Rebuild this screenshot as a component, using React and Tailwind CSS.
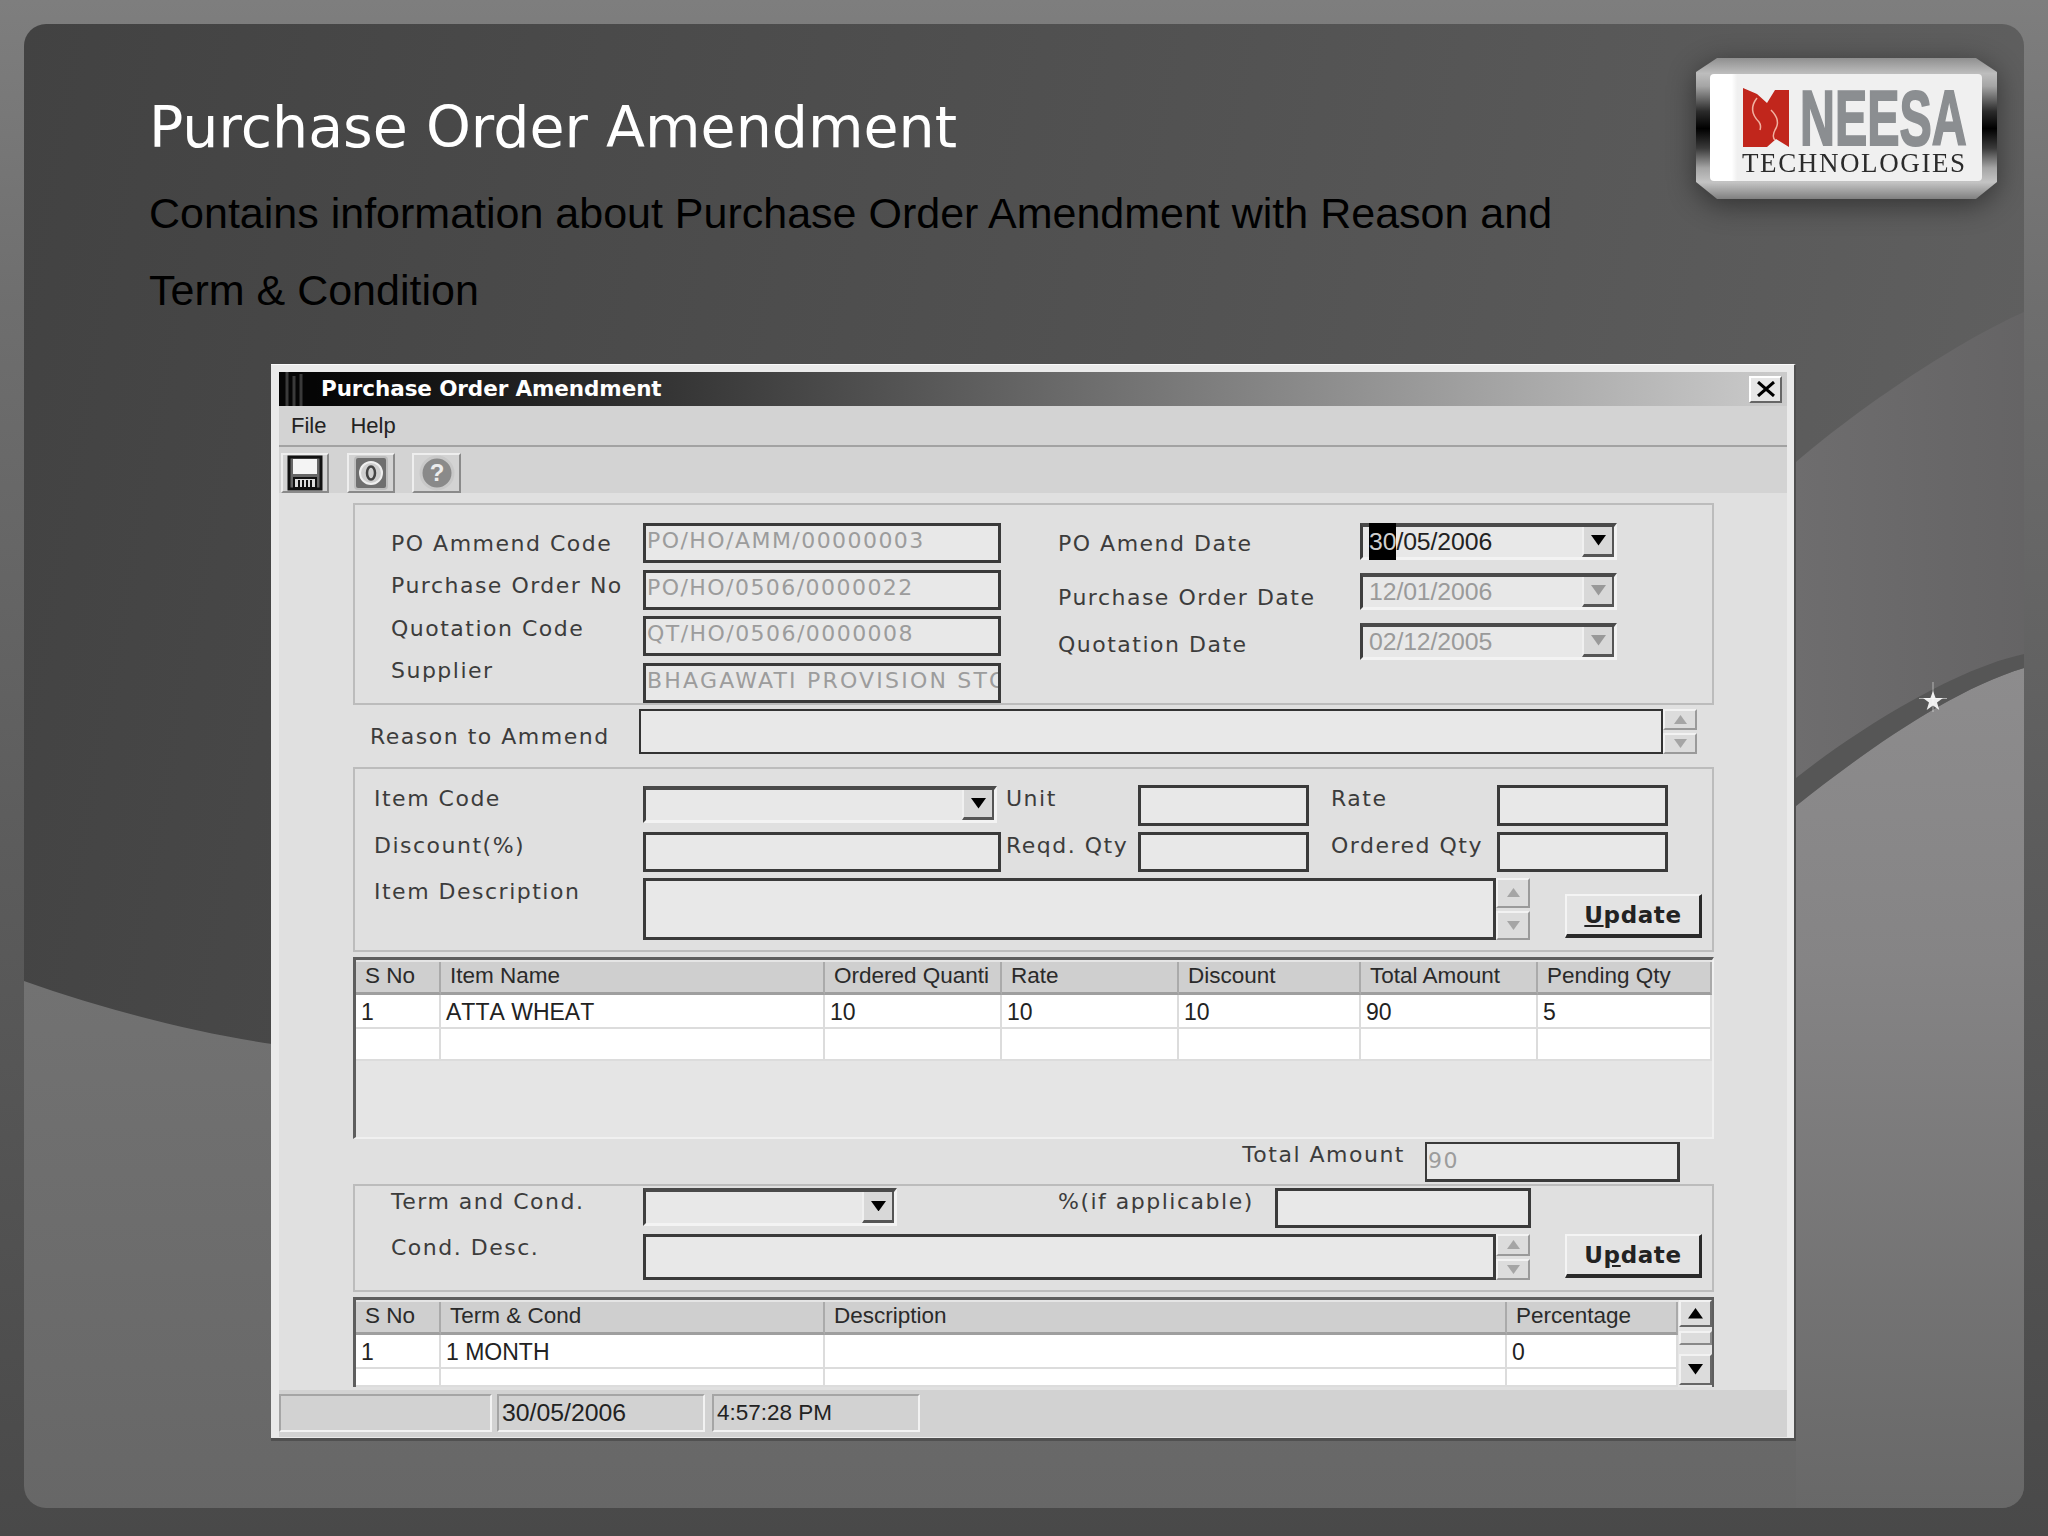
import React from "react";

const LABEL = "flex h-[28px] items-center whitespace-nowrap text-[22px] leading-none tracking-[1.5px] text-[#3c3c3c] [font-family:'DejaVu_Sans',sans-serif]";
const PANEL = "w-[1361px] border-2 border-[#bcbcbc] bg-[#e0e0e0]";
const ARIAL = "[font-family:'Liberation_Sans',Arial,sans-serif]";

function Arrow({ up, color = "#000", size = 15 }) {
  return (
    <svg width={size} height={size * 0.7} viewBox="0 0 16 11">
      <path d={up ? "M8 0L16 11H0Z" : "M0 0H16L8 11Z"} fill={color} />
    </svg>
  );
}

function Input({ value, className }) {
  return (
    <div className={`flex h-[40px] items-start overflow-hidden whitespace-nowrap border-[3px] border-[#3a3a3a] bg-[#e8e8e8] pl-[1px] pt-[2px] text-[22px] leading-[26px] tracking-[1.45px] text-[#9c9c9c] [font-family:'DejaVu_Sans',sans-serif] ${className}`}>
      {value}
    </div>
  );
}

function Combo({ value, disabled, selected, className }) {
  return (
    <div className={`flex items-stretch border-b-[3px] border-l-[3px] border-r-[3px] border-t-[4px] border-b-[#f3f3f3] border-l-[#3f3f3f] border-r-[#f3f3f3] border-t-[#4a4a4a] bg-[#e8e8e8] ${className}`}>
      <div className={`flex flex-1 items-center pl-[6px] text-[24.800px] tracking-[-0.1px] ${ARIAL} ${disabled ? "text-[#9a9a9a]" : "text-[#222]"}`}>
        {selected && <span className="bg-black text-[#cfcfcf]">30</span>}
        {value}
      </div>
      <div className="flex w-[32px] items-center justify-center border-b-[3px] border-l-2 border-r-2 border-b-[#555] border-l-[#f0f0f0] border-r-[#555] bg-[#d8d8d8]">
        <Arrow color={disabled ? "#999" : "#000"} />
      </div>
    </div>
  );
}

function Spinner({ className }) {
  const btn = "flex flex-1 items-center justify-center border-2 border-b-[#9a9a9a] border-l-[#f2f2f2] border-r-[#9a9a9a] border-t-[#f2f2f2] bg-[#dcdcdc]";
  return (
    <div className={`flex w-[34px] flex-none flex-col gap-[3px] ${className}`}>
      <div className={btn}><Arrow up color="#a5a5a5" size={13} /></div>
      <div className={btn}><Arrow color="#a5a5a5" size={13} /></div>
    </div>
  );
}

function UpdateButton({ mnemonic, className }) {
  return (
    <div className={`flex w-[137px] flex-none items-center justify-center border-b-[4px] border-l-2 border-r-[3px] border-t-2 border-b-[#2a2a2a] border-l-[#f4f4f4] border-r-[#2a2a2a] border-t-[#f4f4f4] bg-[#e3e3e3] text-[23px] font-bold tracking-[0.6px] text-[#222] [font-family:'DejaVu_Sans',sans-serif] ${className}`}>
      {mnemonic === 0 ? (<><u>U</u>pdate</>) : (<>U<u>p</u>date</>)}
    </div>
  );
}

function Row({ template, cells, head, className }) {
  const cell = head
    ? `flex items-center overflow-hidden whitespace-nowrap border-b-[3px] border-r-2 border-b-[#9f9f9f] border-r-[#aaa] bg-[#cfcfcf] pb-[2px] pl-[9px] text-[22.500px] text-[#2a2a2a] ${ARIAL}`
    : `flex items-center overflow-hidden whitespace-nowrap border-b-2 border-r-2 border-[#dcdcdc] bg-white pl-[5px] pt-[3px] text-[23px] text-[#222] [font-kerning:none] ${ARIAL}`;
  return (
    <div className={`grid ${template} ${className}`}>
      {cells.map((c, i) => <div key={i} className={cell}>{c}</div>)}
    </div>
  );
}

function Floppy() {
  return (
    <svg width="36" height="36" viewBox="0 0 36 36">
      <rect x="2" y="2" width="32" height="32" fill="#666" stroke="#111" strokeWidth="3" />
      <rect x="6" y="4" width="24" height="15" fill="#f4f4f4" />
      <rect x="7" y="23" width="22" height="10" fill="#ddd" stroke="#111" strokeWidth="2" />
      <path d="M12 25v7M16 25v7M20 25v7M24 25v7" stroke="#111" strokeWidth="2" />
    </svg>
  );
}

function TargetIcon() {
  return (
    <svg width="36" height="36" viewBox="0 0 36 36">
      <rect x="2" y="2" width="32" height="32" rx="3" fill="#6f6f6f" stroke="#bdbdbd" strokeWidth="2" />
      <circle cx="18" cy="18" r="11" fill="#cfcfcf" stroke="#efefef" strokeWidth="2" />
      <ellipse cx="18" cy="18" rx="4" ry="6.500" fill="none" stroke="#444" strokeWidth="2.500" />
    </svg>
  );
}

function HelpIcon() {
  return (
    <svg width="38" height="38" viewBox="0 0 38 38">
      <circle cx="19" cy="19" r="16" fill="#8a8a8a" stroke="#c9c9c9" strokeWidth="3" />
      <text x="19" y="27" textAnchor="middle" fontSize="24" fontWeight="bold" fill="#ececec" fontFamily="Liberation Sans">?</text>
    </svg>
  );
}

function Backdrop() {
  return (
    <svg className="absolute inset-0" width="2000" height="1484" viewBox="24 24 2000 1484">
      <defs>
        <linearGradient id="lower" x1="0" y1="0" x2="0" y2="1">
          <stop offset="0" stopColor="#727272" />
          <stop offset="1" stopColor="#676767" />
        </linearGradient>
        <linearGradient id="side" x1="0" y1="0" x2="1" y2="0">
          <stop offset="0" stopColor="#6e6d6e" />
          <stop offset="1" stopColor="#656465" />
        </linearGradient>
        <linearGradient id="swoosh" x1="0" y1="0" x2="0" y2="1">
          <stop offset="0" stopColor="#8d8c8d" />
          <stop offset="0.35" stopColor="#858485" />
          <stop offset="1" stopColor="#686868" />
        </linearGradient>
      </defs>
      <path d="M24 981C100 1008 190 1032 272 1044L1800 1300V1508H24Z" fill="url(#lower)" />
      <path d="M1796 462C1850 415 1950 345 2024 312V670L1796 810Z" fill="url(#side)" />
      <path d="M1796 806C1860 755 1950 690 2024 668V1508H1796Z" fill="url(#swoosh)" />
      <path d="M1796 778C1850 735 1950 670 2024 654V668C1950 690 1860 755 1796 806Z" fill="#565656" />
      <g fill="#fff">
        <path d="M1933 691l2.600 7h7.400l-6 4.500 2.300 7.500-6.300-4.500-6.300 4.500 2.300-7.500-6-4.500h7.400Z" opacity="0.9" />
        <rect x="1932.500" y="682" width="1" height="30" opacity="0.5" />
        <rect x="1919" y="698" width="28" height="1" opacity="0.5" />
      </g>
    </svg>
  );
}

function Logo() {
  return (
    <div className="mr-[27px] mt-[34px] drop-shadow-[0_6px_14px_rgba(0,0,0,0.45)]">
      <div className="h-[141px] w-[301px] bg-[linear-gradient(to_bottom,#8f8f8f_0%,#bdbdbd_11%,#a5a5a5_20%,#2a2a2a_38%,#000_50%,#3a3a3a_64%,#a5a5a5_78%,#c4c4c4_88%,#808080_100%)] px-[14px] pt-[16px] [clip-path:polygon(7%_0,93%_0,100%_10%,100%_88%,93%_100%,7%_100%,0_88%,0_10%)]">
        <div className="h-[107px] w-[272px] rounded-[4px] bg-[linear-gradient(to_right,#fff_0%,#fff_8%,#f0f0f0_10%,#f0f0f0_100%)] pl-[33px] pt-[14px]">
          <div className="flex h-[58px] items-start">
            <svg width="46" height="59" viewBox="0 0 46 59">
              <path d="M0 0L14 6L24 15L32 2H46V59L33 51L24 59H0Z" fill="#c1261c" />
              <path d="M14 10C6 20 10 28 16 34C18 37 18 39 17 42" fill="none" stroke="#f0b0a0" strokeWidth="1.500" />
              <path d="M28 22C36 30 36 36 32 42C30 46 30 50 32 52" fill="none" stroke="#f0b0a0" strokeWidth="1.500" />
            </svg>
            <div className="ml-[11px] mt-[2px] h-[56px] w-[165px]">
              <span className={`block origin-top-left scale-x-[0.62] whitespace-nowrap text-[78px] font-bold leading-[56px] text-[#8b8e91] [-webkit-text-stroke:2px_#8b8e91] ${ARIAL}`}>NEESA</span>
            </div>
          </div>
          <div className="mt-[5px] -ml-[1px] whitespace-nowrap text-[27px] leading-[24px] tracking-[1.600px] text-[#2b2b2b] [font-family:'Liberation_Serif',serif]">TECHNOLOGIES</div>
        </div>
      </div>
    </div>
  );
}

export default function App() {
  const grid1 = "grid-cols-[85px_384px_177px_177px_182px_177px_1fr]";
  const grid2 = "grid-cols-[85px_384px_682px_171px]";
  return (
    <div className="h-[1536px] w-[2048px] overflow-hidden bg-[linear-gradient(to_bottom,#7e7e7e_0%,#6e6e6e_20%,#5c5c5c_55%,#494949_100%)] p-[24px]">
      <div className="relative h-[1484px] w-[2000px] overflow-hidden rounded-[22px] bg-[linear-gradient(100deg,#424242_0%,#535353_55%,#626262_100%)]">
        <Backdrop />
        <div className="relative">
          {/* heading */}
          <header className="flex items-start justify-between">
            <div className="pl-[125px] pt-[63px]">
              <h1 className="h-[80px] whitespace-nowrap text-[57px] font-normal leading-[80px] text-white [font-family:'DejaVu_Sans',sans-serif]">Purchase Order Amendment</h1>
              <p className={`mt-[8px] text-[43px] leading-[77px] text-black ${ARIAL}`}>
                Contains information about Purchase Order Amendment with Reason and<br />Term &amp; Condition
              </p>
            </div>
            <Logo />
          </header>

          {/* application window */}
          <div className="ml-[247px] mt-[35px] h-[1077px] w-[1525px] border-b-[3px] border-r-[2px] border-t border-b-[#505050] border-r-[#505050] border-t-[#fafafa] bg-[#eaeaea] pl-[8px] pr-[7px] pt-[7px]">
            <div className="flex h-[34px] items-center bg-[linear-gradient(to_right,#000_0%,#6a6a6a_52%,#cbcbcb_100%)]">
              <svg width="36" height="34" viewBox="0 0 36 34">
                <rect width="36" height="34" fill="#050505" />
                <path d="M8 0v34M15 4v30M22 2v32" stroke="#3a3a3a" strokeWidth="3" />
              </svg>
              <span className="ml-[6px] whitespace-nowrap text-[21.500px] font-bold tracking-[-0.1px] text-white [font-family:'DejaVu_Sans',sans-serif]">Purchase Order Amendment</span>
              <div className="ml-auto mr-[5px] flex h-[27px] w-[33px] items-center justify-center border-2 border-b-[#666] border-l-white border-r-[#666] border-t-white bg-[#e6e6e6]">
                <svg width="20" height="16" viewBox="0 0 20 16"><path d="M2 1L18 15M18 1L2 15" stroke="#000" strokeWidth="3" /></svg>
              </div>
            </div>
            <nav className={`flex h-[41px] items-center gap-[24px] border-b-2 border-b-[#a2a2a2] bg-[#d3d3d3] pl-[12px] text-[22px] text-[#222] ${ARIAL}`}>
              <span>File</span>
              <span>Help</span>
            </nav>
            <div className="flex h-[46px] items-end bg-[#d3d3d3] pl-[2px]">
              <div className="flex h-[40px] w-[48px] items-center justify-center border-2 border-b-[#8a8a8a] border-l-[#eee] border-r-[#8a8a8a] border-t-[#eee]"><Floppy /></div>
              <div className="ml-[18px] flex h-[40px] w-[48px] items-center justify-center border-2 border-b-[#8a8a8a] border-l-[#eee] border-r-[#8a8a8a] border-t-[#eee]"><TargetIcon /></div>
              <div className="ml-[17px] flex h-[40px] w-[49px] items-center justify-center border-2 border-b-[#8a8a8a] border-l-[#eee] border-r-[#8a8a8a] border-t-[#eee]"><HelpIcon /></div>
            </div>

            {/* form */}
            <div className="h-[944px] bg-[#e0e0e0] pl-[74px] pt-[10px]">
              <section className={`${PANEL} flex h-[202px]`}>
                <div className="flex w-[288px] flex-col gap-[14.300px] pl-[36px] pt-[25px]">
                  <div className={LABEL}>PO Ammend Code</div>
                  <div className={LABEL}>Purchase Order No</div>
                  <div className={LABEL}>Quotation Code</div>
                  <div className={LABEL}>Supplier</div>
                </div>
                <div className="flex w-[358px] flex-col gap-[6.500px] pt-[18px]">
                  <Input value="PO/HO/AMM/00000003" />
                  <Input value="PO/HO/0506/0000022" />
                  <Input value="QT/HO/0506/0000008" />
                  <Input value={<span className="tracking-[2.200px]">BHAGAWATI PROVISION STORE</span>} />
                </div>
                <div className="ml-[57px] w-[302px] pt-[25px]">
                  <div className={LABEL}>PO Amend Date</div>
                  <div className={`${LABEL} mt-[26px]`}>Purchase Order Date</div>
                  <div className={`${LABEL} mt-[19px]`}>Quotation Date</div>
                </div>
                <div className="flex w-[257px] flex-col gap-[13.500px] pt-[18px]">
                  <Combo className="h-[36.500px]" selected value="/05/2006" />
                  <Combo className="h-[36.500px]" disabled value="12/01/2006" />
                  <Combo className="h-[36.500px]" disabled value="02/12/2005" />
                </div>
              </section>

              <div className="mt-[4px] flex h-[45px] w-[1360px] pl-[17px]">
                <div className={`${LABEL} mt-[14px] w-[269px]`}>Reason to Ammend</div>
                <div className="h-[45px] w-[1024px] border-2 border-[#333] bg-[#e8e8e8]" />
                <Spinner />
              </div>

              <section className={`${PANEL} mt-[13px] h-[185px] pl-[19px] pt-[16px]`}>
                <div className="grid grid-cols-[269px_363px_132px_193px_166px_1fr] grid-rows-[47px_46px_62px]">
                  <div className={LABEL}>Item Code</div>
                  <Combo className="mt-[1px] h-[37px] w-[354px]" />
                  <div className={LABEL}>Unit</div>
                  <Input className="h-[41px] w-[171px]" />
                  <div className={LABEL}>Rate</div>
                  <Input className="h-[41px] w-[171px]" />

                  <div className={LABEL}>Discount(%)</div>
                  <Input className="w-[358px]" />
                  <div className={LABEL}>Reqd. Qty</div>
                  <Input className="w-[171px]" />
                  <div className={LABEL}>Ordered Qty</div>
                  <Input className="w-[171px]" />

                  <div className={LABEL}>Item Description</div>
                  <div className="col-span-5 flex h-[62px]">
                    <div className="w-[853px] flex-none border-[3px] border-[#3a3a3a] bg-[#e8e8e8]" />
                    <Spinner />
                    <UpdateButton mnemonic={0} className="ml-[35px] mt-[16px] h-[44px]" />
                  </div>
                </div>
              </section>

              <div className="mt-[5px] h-[182px] w-[1361px] border-b-2 border-l-[3px] border-r-2 border-t-[3px] border-b-[#f0f0f0] border-l-[#5e5e5e] border-r-[#f0f0f0] border-t-[#5e5e5e] bg-[#e5e5e5] pt-[2px]">
                <Row head template={grid1} className="h-[33px]" cells={["S No", "Item Name", "Ordered Quanti", "Rate", "Discount", "Total Amount", "Pending Qty"]} />
                <Row template={grid1} className="h-[34px]" cells={["1", "ATTA WHEAT", "10", "10", "10", "90", "5"]} />
                <Row template={grid1} className="h-[32px]" cells={["", "", "", "", "", "", ""]} />
              </div>

              <div className="mt-[3px] flex h-[39px] w-[1327px] items-start justify-end">
                <div className={`${LABEL} mr-[20px] mt-[-1px]`}>Total Amount</div>
                <Input className="h-[39px] w-[255px] border-l-2 border-t-2 pt-[4px]" value="90" />
              </div>

              <section className={`${PANEL} mt-[3px] h-[108px] pl-[36px] pt-[2px]`}>
                <div className="grid grid-cols-[252px_415px_217px_1fr] grid-rows-[46px_46px]">
                  <div className={LABEL}>Term and Cond.</div>
                  <Combo className="h-[38px] w-[254px]" />
                  <div className={LABEL}>%(if applicable)</div>
                  <Input className="w-[256px]" />

                  <div className={LABEL}>Cond. Desc.</div>
                  <div className="col-span-3 flex h-[46px]">
                    <div className="w-[853px] flex-none border-[3px] border-[#3a3a3a] bg-[#e8e8e8]" />
                    <Spinner />
                    <UpdateButton mnemonic={1} className="ml-[35px] h-[44px]" />
                  </div>
                </div>
              </section>

              <div className="mt-[5px] flex h-[90px] w-[1361px] border-l-[3px] border-r-2 border-t-[3px] border-l-[#5e5e5e] border-r-[#5e5e5e] border-t-[#5e5e5e] bg-[#e5e5e5]">
                <div className="flex-1 overflow-hidden pt-[2px]">
                  <Row head template={grid2} className="h-[33px]" cells={["S No", "Term & Cond", "Description", "Percentage"]} />
                  <Row template={grid2} className="h-[34px]" cells={["1", "1 MONTH", "", "0"]} />
                  <Row template={grid2} className="h-[18px]" cells={["", "", "", ""]} />
                </div>
                <div className="flex w-[33px] flex-col">
                  <div className="flex h-[27px] items-center justify-center border-2 border-b-[#666] border-l-[#f2f2f2] border-r-[#666] border-t-[#f2f2f2] bg-[#dcdcdc]"><Arrow up /></div>
                  <div className="mt-[4px] h-[14px] border-2 border-b-[#888] border-l-[#f2f2f2] border-r-[#888] border-t-[#f2f2f2] bg-[#dcdcdc]" />
                  <div className="mt-[9px] flex h-[31px] items-center justify-center border-2 border-b-[#666] border-l-[#f2f2f2] border-r-[#666] border-t-[#f2f2f2] bg-[#dcdcdc]"><Arrow /></div>
                </div>
              </div>

              <div className={`-ml-[74px] mt-[3px] flex h-[47px] w-[1508px] items-start gap-[5px] bg-[#d2d2d2] pt-[4px] text-[#222] ${ARIAL}`}>
                <div className="h-[38px] w-[213px] border-2 border-b-[#f2f2f2] border-l-[#a5a5a5] border-r-[#f2f2f2] border-t-[#a5a5a5]" />
                <div className="flex h-[38px] w-[208px] items-center border-2 border-b-[#f2f2f2] border-l-[#a5a5a5] border-r-[#f2f2f2] border-t-[#a5a5a5] pl-[3px] text-[24.800px]">30/05/2006</div>
                <div className="ml-[2px] flex h-[38px] w-[208px] items-center border-2 border-b-[#f2f2f2] border-l-[#a5a5a5] border-r-[#f2f2f2] border-t-[#a5a5a5] pl-[3px] text-[22.500px]">4:57:28 PM</div>
              </div>
            </div>
          </div>
        </div>
      </div>
    </div>
  );
}
